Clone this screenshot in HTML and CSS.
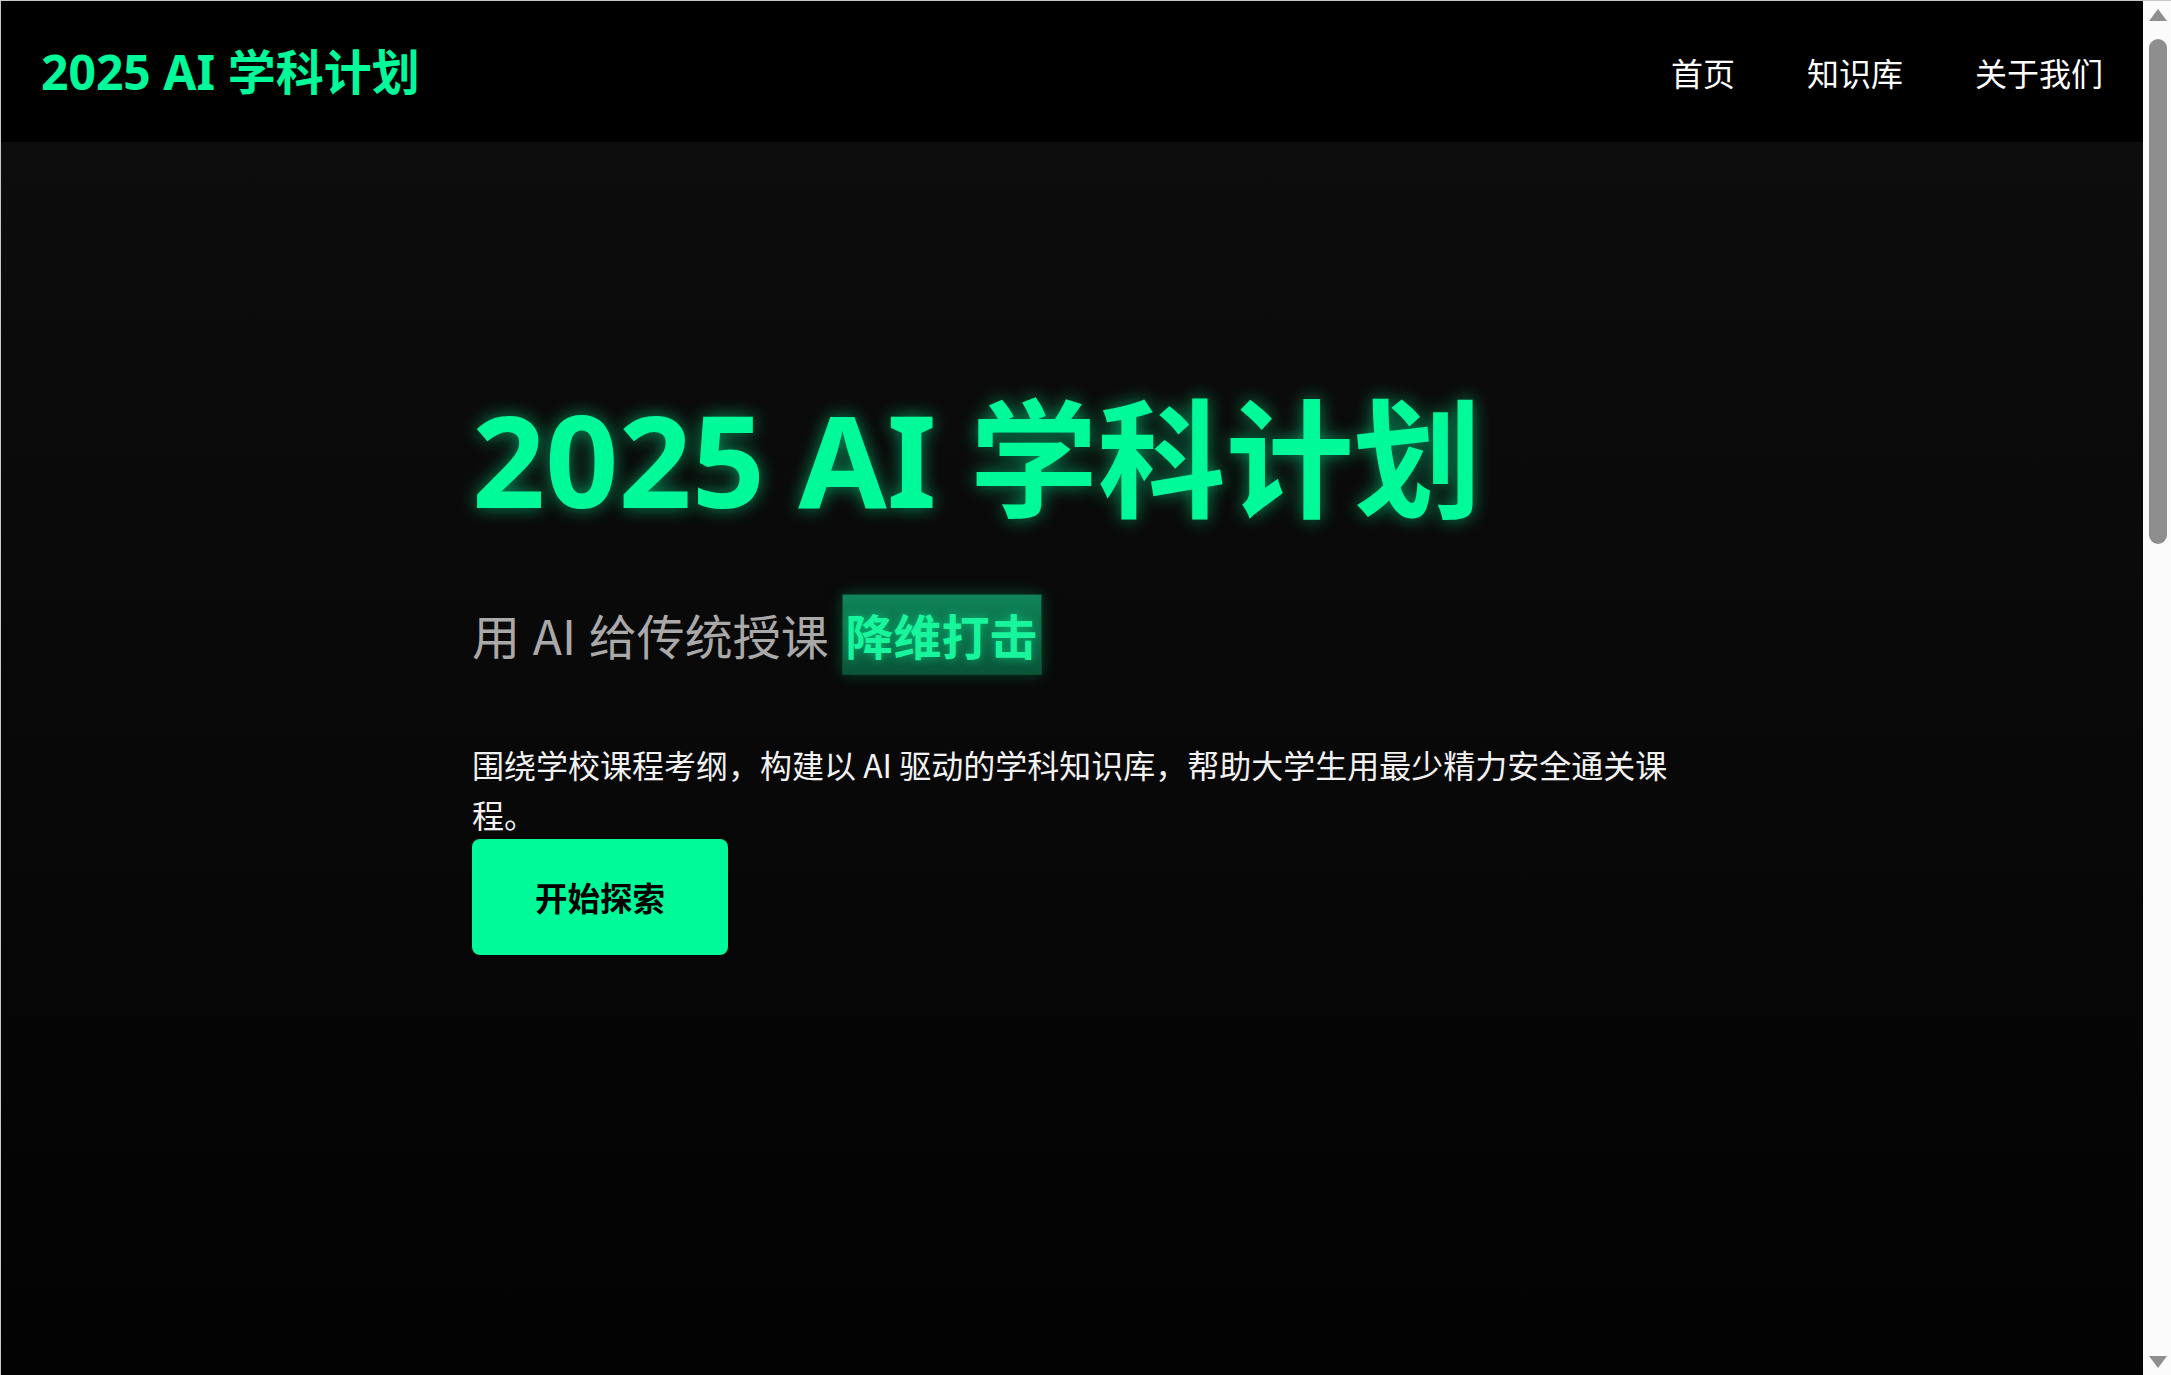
FILE: index.html
```html
<!DOCTYPE html>
<html lang="zh-CN">
<head>
<meta charset="utf-8">
<title>2025 AI 学科计划</title>
<link rel="stylesheet" href="styles.css">
</head>
<body>
<div class="window">
  <div class="frame">
    <header class="site-header">
      <a class="logo" href="#">2025 AI 学科计划</a>
      <nav class="nav">
        <a class="nav-link" href="#">首页</a>
        <a class="nav-link" href="#">知识库</a>
        <a class="nav-link" href="#">关于我们</a>
      </nav>
    </header>
    <main>
      <section class="hero">
        <div class="container">
          <h1 class="hero-title">2025 AI 学科计划</h1>
          <p class="hero-sub">用 AI 给传统授课 <span class="highlight">降维打击</span></p>
          <p class="hero-desc">围绕学校课程考纲，构建以 AI 驱动的学科知识库，帮助大学生用最少精力安全通关课程。</p>
          <a class="btn" href="#">开始探索</a>
        </div>
      </section>
      <section class="more"></section>
    </main>
  </div>
  <div class="scrollbar" aria-hidden="true">
    <span class="sb-arrow sb-up"></span>
    <span class="sb-thumb"></span>
    <span class="sb-fill"></span>
    <span class="sb-arrow sb-down"></span>
  </div>
</div>
</body>
</html>
```

FILE: styles.css
```css
html, body {
  margin: 0;
  padding: 0;
  background: #030303;
}

body {
  font-family: "Noto Sans", "Noto Sans CJK SC", sans-serif;
  color: #f0f0f0;
  height: 100vh;
  overflow: hidden;
}

.window {
  display: flex;
  height: 100vh;
  box-sizing: border-box;
  border-top: 1px solid #c8c8c8;
  border-left: 1px solid #c8c8c8;
}

.frame {
  flex: 1;
  min-width: 0;
  overflow: hidden;
}

.scrollbar {
  width: 28px;
  flex: none;
  background: #fbfbfb;
  display: flex;
  flex-direction: column;
  align-items: flex-start;
  padding: 8px 4px 7px 6px;
  box-sizing: border-box;
}

.sb-arrow {
  display: block;
  width: 0;
  height: 0;
  border-left: 9px solid transparent;
  border-right: 9px solid transparent;
}

.sb-up {
  border-bottom: 12px solid #8e8e8e;
}

.sb-down {
  border-top: 12px solid #8e8e8e;
}

.sb-thumb {
  display: block;
  width: 18px;
  height: 505px;
  margin-top: 18px;
  background: #8e8e8e;
  border-radius: 9px;
}

.sb-fill {
  flex: 1;
}

.site-header {
  height: 141px;
  background: #000;
  display: flex;
  align-items: center;
  justify-content: space-between;
  padding: 0 40px;
}

.logo {
  font-size: 48px;
  font-weight: 700;
  color: #00fa9a;
  text-decoration: none;
  line-height: 1;
}

.nav {
  display: flex;
  gap: 72px;
}

.nav-link {
  font-family: "Noto Sans CJK SC", sans-serif;
  font-size: 32px;
  color: #fff;
  text-decoration: none;
  line-height: 1;
}

.hero {
  min-height: calc(100vh - 142px);
  background: linear-gradient(180deg, #0d0d0d 0%, #070707 60%, #030303 100%);
  box-sizing: border-box;
  padding-top: 240px;
}

.container {
  max-width: 1200px;
  margin: 0 auto;
}

.hero-title {
  margin: 0;
  font-size: 128px;
  font-weight: 700;
  line-height: 1.2;
  color: #00fa9a;
  text-shadow: 0 0 18px rgba(0, 250, 154, 0.55);
}

.hero-sub {
  margin: 58px 0 0;
  font-family: "Noto Sans CJK SC", sans-serif;
  font-size: 48px;
  line-height: 1.2;
  word-spacing: 2px;
  color: #a9a9a9;
}

.highlight {
  display: inline-block;
  padding: 11px 3px;
  font-weight: 700;
  color: #19f59c;
  background: linear-gradient(180deg, #108559 0%, #0c6a47 55%, #0a5438 100%);
  border: 1px solid #0b4a32;
  box-shadow: 0 0 14px rgba(0, 250, 154, 0.25);
  text-shadow: 0 0 10px rgba(0, 250, 154, 0.5);
}

.hero-desc {
  margin: 64px 0 0;
  font-family: "Noto Sans CJK SC", sans-serif;
  font-size: 32px;
  line-height: 50px;
  color: #f2f2f2;
}

.btn {
  display: inline-block;
  width: 256px;
  height: 116px;
  box-sizing: border-box;
  line-height: 116px;
  text-align: center;
  font-family: "Noto Sans CJK SC", sans-serif;
  font-size: 32.5px;
  font-weight: 700;
  color: #000;
  background: #00fa9a;
  border-radius: 8px;
  text-decoration: none;
}

.more {
  height: 2750px;
  background: #030303;
}
```
